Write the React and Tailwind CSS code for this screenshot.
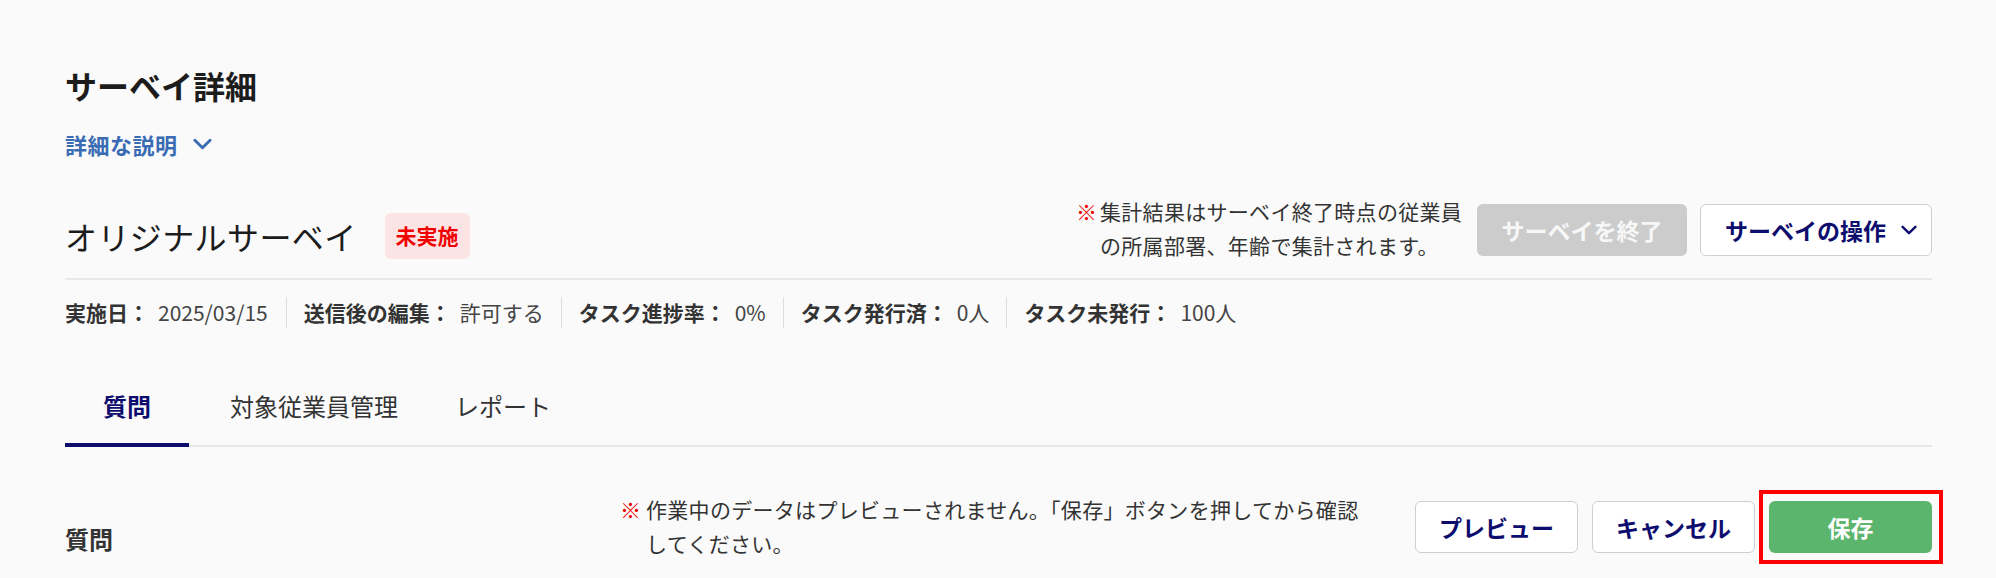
import React from "react";

const NAVY = "text-[#0d0d6e]";

const Chevron = ({ className }) => (
  <svg className={className} viewBox="0 0 20 12" fill="none">
    <polyline
      points="2,2 10,10 18,2"
      stroke="currentColor"
      strokeWidth="3"
      strokeLinecap="round"
      strokeLinejoin="round"
    />
  </svg>
);

const metaItems = [
  { label: "実施日：", value: "2025/03/15" },
  { label: "送信後の編集：", value: "許可する" },
  { label: "タスク進捗率：", value: "0%" },
  { label: "タスク発行済：", value: "0人" },
  { label: "タスク未発行：", value: "100人" },
];

const App = () => {
  return (
    <div
      className="min-h-screen bg-[#fafafa] pl-[65px] pr-[64px] pt-[65px] text-[#333]"
      style={{ fontFamily: '"Noto Sans CJK JP", "Noto Sans", sans-serif' }}
    >
      {/* PAGE TITLE */}
      <h1 className="text-[32px] leading-[40px] font-bold text-[#1c1c1c]">
        サーベイ詳細
      </h1>

      <button className="mt-[24px] flex items-center gap-[15px] text-[22px] leading-[30px] font-bold text-[#3a6cb4]">
        <span className="tracking-[0.5px]">詳細な説明</span>
        <Chevron className="w-[19px] h-[12px]" />
      </button>

      {/* SURVEY HEADER */}
      <div className="mt-[35px] flex items-center justify-between pb-[16px] border-b-2 border-[#e8e8e8]">
        <div className="flex items-center pt-[16px]">
          <h2 className="text-[32px] leading-[46px] tracking-[0.4px] text-[#1c1c1c]">
            オリジナルサーベイ
          </h2>
          <span className="ml-[28px] h-[46px] px-[11px] flex items-center rounded-[6px] bg-[#fde4e4] text-[21px] font-bold text-[#f00000]">
            未実施
          </span>
        </div>

        <div className="flex items-center">
          <div className="flex text-[21px] leading-[34px] tracking-[0.3px]">
            <span className="text-[#f00000] w-[24px] shrink-0">※</span>
            <p className="w-[368px]">
              集計結果はサーベイ終了時点の従業員の所属部署、年齢で集計されます。
            </p>
          </div>

          <button className="ml-[9px] mt-[4px] h-[52px] w-[210px] rounded-[6px] bg-[#cccccc] text-[23px] font-bold text-[#f7f7f7]">
            サーベイを終了
          </button>

          <button
            className={`ml-[13px] mt-[4px] h-[52px] w-[232px] flex items-center pl-[24px] pr-[14px] rounded-[6px] border border-[#cfcfcf] bg-white text-[23px] font-bold ${NAVY}`}
          >
            <span>サーベイの操作</span>
            <Chevron className="ml-auto w-[16px] h-[10px]" />
          </button>
        </div>
      </div>

      {/* META */}
      <div className="mt-[17px] flex items-center text-[21px]">
        {metaItems.map((item, index) => (
          <div
            key={index}
            className={`h-[31px] flex items-center ${
              index === 0 ? "pr-[18px]" : "px-[17px] border-l border-[#dddddd]"
            }`}
          >
            <span className="font-bold text-[#333]">{item.label}</span>
            <span className="ml-[9px] text-[#444]">{item.value}</span>
          </div>
        ))}
      </div>

      {/* TABS */}
      <div className="mt-[62px] flex items-end border-b-2 border-[#e6e6e6] text-[24px] leading-[32px]">
        <div className={`w-[124px] pb-[21px] text-center font-bold border-b-4 border-[#0d0d6e] -mb-[2px] ${NAVY}`}>
          質問
        </div>
        <div className="ml-[41px] pb-[21px] border-b-4 border-transparent -mb-[2px]">
          対象従業員管理
        </div>
        <div className="ml-[57px] pb-[21px] border-b-4 border-transparent -mb-[2px]">
          レポート
        </div>
      </div>

      {/* QUESTIONS */}
      <div className="mt-[45px] flex items-start justify-between">
        <h3 className="mt-[31px] text-[24px] leading-[32px] font-bold text-[#333]">
          質問
        </h3>

        <div className="flex items-start">
          <div className="flex w-[750px] text-[21px] leading-[34px] tracking-[0.3px]">
            <span className="text-[#f00000] w-[26px] shrink-0">※</span>
            <p className="w-[724px]">
              作業中のデータはプレビューされません。「保存」ボタンを押してから確認してください。
            </p>
          </div>

          <div className="ml-[45px] mt-[9px] flex gap-[14px]">
            <button className={`h-[52px] w-[163px] rounded-[6px] border border-[#cfcfcf] bg-white text-[23px] font-bold ${NAVY}`}>
              プレビュー
            </button>
            <button className={`h-[52px] w-[163px] rounded-[6px] border border-[#cfcfcf] bg-white text-[23px] font-bold ${NAVY}`}>
              キャンセル
            </button>
            <div className="relative">
              <button className="h-[52px] w-[163px] rounded-[6px] bg-[#5cb56c] text-[23px] font-bold text-white">
                保存
              </button>
              <div className="absolute -left-[10px] -right-[11px] -top-[11px] -bottom-[11px] border-4 border-[#ff0000] pointer-events-none"></div>
            </div>
          </div>
        </div>
      </div>
    </div>
  );
};

export default App;
